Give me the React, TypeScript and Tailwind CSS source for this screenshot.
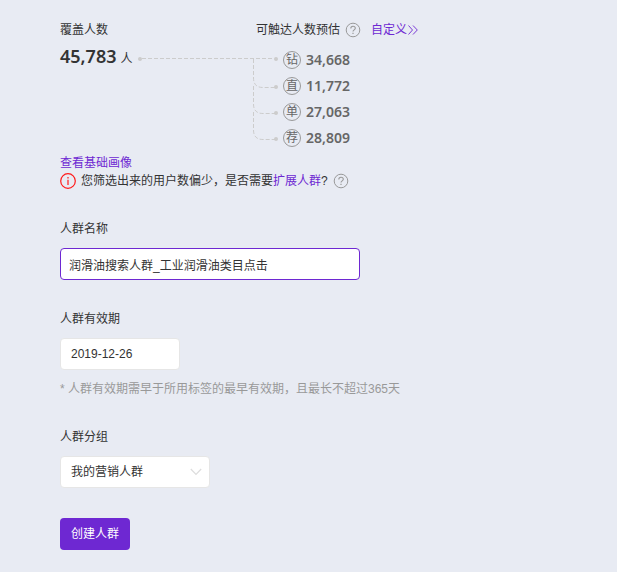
import { useState } from "react";
import type { ReactNode } from "react";

const channels = [
  { mark: "钻", count: "34,668" },
  { mark: "直", count: "11,772" },
  { mark: "单", count: "27,063" },
  { mark: "荐", count: "28,809" },
];

function HelpIcon() {
  return (
    <svg viewBox="0 0 16 16" className="block h-4 w-4 shrink-0" fill="none" stroke="#999" aria-hidden="true">
      <circle cx="8" cy="8" r="6.8" />
      <path d="M5.8 6.4C5.8 5 6.8 4.3 8 4.3s2.3.8 2.3 2c0 1.500-2.300 1.600-2.300 3.200" strokeWidth="1.100" />
      <path d="M8 10.700v1.300" strokeWidth="1.200" />
    </svg>
  );
}

function InfoIcon() {
  return (
    <svg viewBox="0 0 16 16" className="block h-4 w-4 shrink-0" fill="none" stroke="#ff1a1a" aria-hidden="true">
      <circle cx="8" cy="8" r="7.300" strokeWidth="1.200" />
      <path d="M8 4v1.500M8 6.800v5.200" strokeWidth="1.200" />
    </svg>
  );
}

function Branches() {
  return (
    <svg viewBox="0 0 140 92" className="block h-[92px] w-[140px] shrink-0" fill="none" stroke="#ccc" aria-hidden="true">
      <g strokeDasharray="4 2">
        <path d="M4 8.500H136" />
        <path d="M115.500 9V28Q115.500 37.500 125 37.500H137" />
        <path d="M115.500 36V54Q115.500 63.500 125 63.500H137" />
        <path d="M115.500 62V80Q115.500 89.500 125 89.500H137" />
      </g>
      <g fill="#ccc" stroke="none">
        <circle cx="2" cy="9" r="2" />
        <circle cx="138" cy="9" r="2" />
        <circle cx="138" cy="37" r="2" />
        <circle cx="138" cy="63" r="2" />
        <circle cx="138" cy="89" r="2" />
      </g>
    </svg>
  );
}

function Field({ id, label, children }: { id: string; label: string; children: ReactNode }) {
  return (
    <div className="flex flex-col items-start">
      <label htmlFor={id} className="mb-2.5 leading-[18px]">
        {label}
      </label>
      {children}
    </div>
  );
}

export default function App() {
  const [name, setName] = useState("润滑油搜索人群_工业润滑油类目点击");
  const [date, setDate] = useState("2019-12-26");

  return (
    <main className="min-h-screen bg-[#e8ebf3] px-[60px] py-5 font-['Liberation_Sans','Noto_Sans_CJK_SC',sans-serif] text-xs text-[#333]">
      <section className="grid grid-cols-[196px_1fr] leading-5">
        <h2>覆盖人数</h2>
        <div className="flex items-center">
          <h2>可触达人数预估</h2>
          <span className="ml-[5px]">
            <HelpIcon />
          </span>
          <a href="#custom" className="ml-2.5 flex items-center text-[#6e28d2]">
            自定义
            <svg viewBox="0 0 12 12" className="h-3 w-3" fill="none" stroke="currentColor" strokeWidth="0.9" aria-hidden="true">
              <path d="M1.500 1.500 5.500 6 1.500 10.500M6 1.500 10.300 6 6 10.500" />
            </svg>
          </a>
        </div>
      </section>

      <section className="mt-2 flex items-start">
        <p className="flex w-[78px] items-baseline gap-1 leading-4">
          <strong className="font-['Noto_Sans'] text-lg leading-4 font-semibold">45,783</strong>人
        </p>
        <div className="pt-0.5">
          <Branches />
        </div>
        <ul className="ml-[5px] flex flex-col gap-2 pt-[3px]">
          {channels.map((c) => (
            <li key={c.mark} className="flex h-[18px] items-center gap-[5px] text-[#666]">
              <span className="flex h-[18px] w-[18px] items-center justify-center rounded-full border border-[#999] leading-4">
                {c.mark}
              </span>
              <b className="font-['Noto_Sans'] text-sm leading-4 font-semibold">{c.count}</b>
            </li>
          ))}
        </ul>
      </section>

      <section className="mt-[7px]">
        <a href="#portrait" className="block w-fit leading-[18px] text-[#6e28d2]">
          查看基础画像
        </a>
        <p className="flex items-center leading-[18px]">
          <InfoIcon />
          <span className="ml-[5px]">
            您筛选出来的用户数偏少，是否需要
            <a href="#expand" className="text-[#6e28d2]">
              扩展人群
            </a>
            ?
          </span>
          <span className="ml-[5px]">
            <HelpIcon />
          </span>
        </p>
      </section>

      <form className="mt-[30px] flex flex-col items-start gap-[30px]" onSubmit={(e) => e.preventDefault()}>
        <Field id="name" label="人群名称">
          <input
            id="name"
            value={name}
            onChange={(e) => setName(e.target.value)}
            className="h-8 w-[300px] rounded border border-[#6e28d2] bg-white px-2 outline-none"
          />
        </Field>
        <Field id="date" label="人群有效期">
          <input
            id="date"
            value={date}
            onChange={(e) => setDate(e.target.value)}
            className="h-8 w-[120px] rounded border border-[#e6e6e6] bg-white px-2.5 outline-none"
          />
          <p className="mt-2.5 leading-[18px] text-[#999]">* 人群有效期需早于所用标签的最早有效期，且最长不超过365天</p>
        </Field>
        <Field id="group" label="人群分组">
          <div className="relative">
            <select
              id="group"
              className="block h-8 w-[150px] appearance-none rounded border border-[#e6e6e6] bg-white px-2.5 outline-none"
            >
              <option>我的营销人群</option>
            </select>
            <svg
              viewBox="0 0 12 8"
              className="pointer-events-none absolute top-3 right-2 h-2 w-3"
              fill="none"
              stroke="#ddd"
              aria-hidden="true"
            >
              <path d="M.8 1 6 6.500 11.200 1" strokeWidth="1.200" />
            </svg>
          </div>
        </Field>
        <button type="submit" className="h-8 rounded bg-[#6e28d2] px-[11px] text-white">
          创建人群
        </button>
      </form>
    </main>
  );
}
